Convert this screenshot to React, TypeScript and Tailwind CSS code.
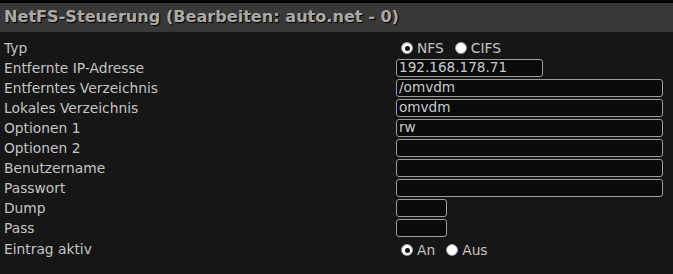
import React from "react";

function Radio({ checked, label }: { checked: boolean; label: string }) {
  return (
    <span className="inline-flex items-center">
      <span className="ml-[5px] mr-[4px] flex h-[12px] w-[12px] items-center justify-center rounded-full border border-[#9a9a9a] bg-white">
        {checked && <span className="h-[5px] w-[5px] rounded-full bg-[#111]" />}
      </span>
      <span>{label}</span>
    </span>
  );
}

function Field({ value, w }: { value?: string; w: string }) {
  return (
    <div
      className={`${w} flex h-[18px] items-center overflow-hidden rounded-[3px] border border-[#9c9c9c] bg-[#0a0a0a] px-[2px] text-[13.6px] leading-none text-[#c9ccd0]`}
    >
      {value}
    </div>
  );
}

export default function App() {
  const rows: { label: string; content: React.ReactNode }[] = [
    {
      label: "Typ",
      content: (
        <div className="flex items-center gap-[6px]">
          <Radio checked label="NFS" />
          <Radio checked={false} label="CIFS" />
        </div>
      ),
    },
    { label: "Entfernte IP-Adresse", content: <Field w="w-[147px]" value="192.168.178.71" /> },
    { label: "Entferntes Verzeichnis", content: <Field w="w-[267px]" value="/omvdm" /> },
    { label: "Lokales Verzeichnis", content: <Field w="w-[267px]" value="omvdm" /> },
    { label: "Optionen 1", content: <Field w="w-[267px]" value="rw" /> },
    { label: "Optionen 2", content: <Field w="w-[267px]" /> },
    { label: "Benutzername", content: <Field w="w-[267px]" /> },
    { label: "Passwort", content: <Field w="w-[267px]" /> },
    { label: "Dump", content: <Field w="w-[51px]" /> },
    { label: "Pass", content: <Field w="w-[51px]" /> },
    {
      label: "Eintrag aktiv",
      content: (
        <div className="flex items-center gap-[6px] pt-[2px]">
          <Radio checked label="An" />
          <Radio checked={false} label="Aus" />
        </div>
      ),
    },
  ];

  return (
    <div
      className="h-[274px] w-[673px] overflow-hidden bg-[#161616] text-[#c4c4c4]"
      style={{ fontFamily: '"DejaVu Sans", Verdana, sans-serif' }}
    >
      <div className="h-[3px] bg-[#050505]" />
      <div className="flex h-[29px] items-center bg-[#383838] pl-[4px] text-[16.1px] font-bold text-[#a9a9a9] [text-shadow:1px_1px_1px_#000]">
        NetFS-Steuerung (Bearbeiten: auto.net - 0)
      </div>
      <div className="pt-[6px]">
        {rows.map((r) => (
          <div key={r.label} className="grid h-[20px] grid-cols-[392px_1fr] items-center pl-[4px] text-[13.8px]">
            <div className="pt-[2px] leading-none">{r.label}</div>
            <div className="flex items-center">{r.content}</div>
          </div>
        ))}
      </div>
    </div>
  );
}
